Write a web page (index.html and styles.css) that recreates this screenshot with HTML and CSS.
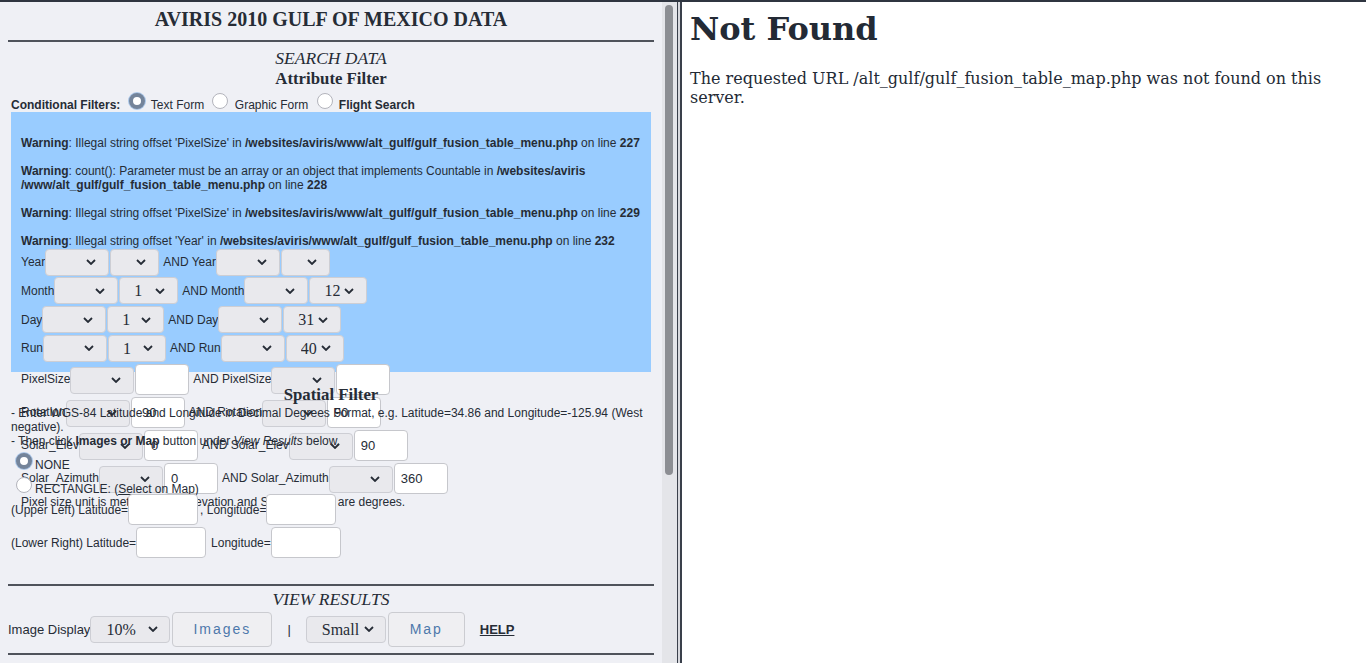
FILE: index.html
```html
<!DOCTYPE html>
<html>
<head>
<meta charset="utf-8">
<title>AVIRIS 2010 Gulf of Mexico Data</title>
<link rel="stylesheet" href="styles.css">
</head>
<body>
<div class="frames">
  <div class="frame-menu">
    <div class="menu-doc">
      <h1 class="site-title">AVIRIS 2010 GULF OF MEXICO DATA</h1>
      <hr class="rule">
      <h2 class="sec-title">SEARCH DATA</h2>
      <h3 class="sub-title">Attribute Filter</h3>
      <div class="panel">
        <div class="cond"><b>Conditional Filters:</b> <input type="radio" class="radio" name="mode" checked> Text Form <input type="radio" class="radio" name="mode"> Graphic Form <input type="radio" class="radio" name="mode"> <b>Flight Search</b></div>
        <div class="attr-box">
          <div class="warnings"><br>
<b>Warning</b>: Illegal string offset 'PixelSize' in <b>/websites/aviris/www/alt_gulf/gulf_fusion_table_menu.php</b> on line <b>227</b><br>
<br>
<b>Warning</b>: count(): Parameter must be an array or an object that implements Countable in <b>/websites/aviris<br>/www/alt_gulf/gulf_fusion_table_menu.php</b> on line <b>228</b><br>
<br>
<b>Warning</b>: Illegal string offset 'PixelSize' in <b>/websites/aviris/www/alt_gulf/gulf_fusion_table_menu.php</b> on line <b>229</b><br>
<br>
<b>Warning</b>: Illegal string offset 'Year' in <b>/websites/aviris/www/alt_gulf/gulf_fusion_table_menu.php</b> on line <b>232</b></div>
          <div class="arow">
            <span class="lbl">Year</span>
            <select class="sel w64"><option></option></select>
            <select class="sel w49"><option></option></select>
            <span class="and">AND Year</span>
            <select class="sel w64"><option></option></select>
            <select class="sel w49"><option></option></select>
          </div>
          <div class="arow">
            <span class="lbl">Month</span>
            <select class="sel w64"><option></option></select>
            <select class="sel w59"><option>1</option></select>
            <span class="and">AND Month</span>
            <select class="sel w64"><option></option></select>
            <select class="sel w58"><option>12</option></select>
          </div>
          <div class="arow">
            <span class="lbl">Day</span>
            <select class="sel w64"><option></option></select>
            <select class="sel w57"><option>1</option></select>
            <span class="and">AND Day</span>
            <select class="sel w64"><option></option></select>
            <select class="sel w58"><option>31</option></select>
          </div>
          <div class="arow">
            <span class="lbl">Run</span>
            <select class="sel w64"><option></option></select>
            <select class="sel w58"><option>1</option></select>
            <span class="and">AND Run</span>
            <select class="sel w64"><option></option></select>
            <select class="sel w58"><option>40</option></select>
          </div>
          <div class="arow tall">
            <span class="lbl">PixelSize</span>
            <select class="sel w64 low"><option></option></select>
            <input class="field" type="text" value="">
            <span class="and">AND PixelSize</span>
            <select class="sel w64 low"><option></option></select>
            <input class="field" type="text" value="">
          </div>
          <div class="arow tall">
            <span class="lbl">Rotation</span>
            <select class="sel w64 low"><option></option></select>
            <input class="field" type="text" value="-90">
            <span class="and">AND Rotation</span>
            <select class="sel w64 low"><option></option></select>
            <input class="field" type="text" value="90">
          </div>
          <div class="arow tall">
            <span class="lbl">Solar_Elev</span>
            <select class="sel w64 low"><option></option></select>
            <input class="field" type="text" value="0">
            <span class="and">AND Solar_Elev</span>
            <select class="sel w64 low"><option></option></select>
            <input class="field" type="text" value="90">
          </div>
          <div class="arow tall">
            <span class="lbl">Solar_Azimuth</span>
            <select class="sel w64 low"><option></option></select>
            <input class="field" type="text" value="0">
            <span class="and">AND Solar_Azimuth</span>
            <select class="sel w64 low"><option></option></select>
            <input class="field" type="text" value="360">
          </div>
          <div class="unit-note">Pixel size unit is meters, Solar Elevation and Solar Azimuth are degrees.</div>
        </div>
        <h3 class="sub-title spatial-title">Spatial Filter</h3>
        <div class="spatial">
          <div>- Enter WGS-84 Latitude and Longitude in Decimal Degrees Format, e.g. Latitude=34.86 and Longitude=-125.94 (West negative).</div>
          <div>- Then click <b>Images or Map</b> button under <i>View Results</i> below.</div>
          <div class="opt"><input type="radio" class="radio" name="region" checked>NONE</div>
          <div class="opt"><input type="radio" class="radio" name="region">RECTANGLE: (<a class="plain-link" href="#">Select on Map</a>)</div>
          <div class="coord first">
            <span>(Upper Left) Latitude=</span>
            <input class="field wide" type="text">
            <span class="lon lon-comma">, Longitude=</span>
            <input class="field wide" type="text">
          </div>
          <div class="coord">
            <span>(Lower Right) Latitude=</span>
            <input class="field wide" type="text">
            <span class="lon">Longitude=</span>
            <input class="field wide" type="text">
          </div>
        </div>
      </div>
      <hr class="rule rule-results">
      <h2 class="sec-title view-title">VIEW RESULTS</h2>
      <div class="results">
        <span>Image Display</span>
        <select class="sel res-sel"><option>10%</option></select>
        <button class="btn btn-images" type="button">Images</button>
        <span class="bar">|</span>
        <select class="sel res-sel"><option>Small</option></select>
        <button class="btn btn-map" type="button">Map</button>
        <a class="help" href="#">HELP</a>
      </div>
      <hr class="rule rule-end">
    </div>
    <div class="scrollbar"><div class="thumb"></div></div>
  </div>
  <div class="frame-border"></div>
  <div class="frame-map">
    <h1>Not Found</h1>
    <p>The requested URL /alt_gulf/gulf_fusion_table_map.php was not found on this server.</p>
  </div>
</div>
</body>
</html>
```
FILE: styles.css
```css
* { box-sizing: border-box; }
html, body { margin: 0; padding: 0; }
body { width: 1366px; height: 663px; overflow: hidden; background: #ffffff; }

.frames { display: flex; height: 663px; border-top: 2px solid #2f3540; }

/* left frame */
.frame-menu { width: 677px; display: flex; background: #eff0f5; overflow: hidden; }
.menu-doc { width: 662px; flex: none; padding: 6px 8px 0; color: #262c36; font-family: "Liberation Serif", serif; }
.scrollbar { width: 15px; flex: none; background: #e4e5e9; padding: 3px 4px 0 3px; }
.thumb { width: 8px; height: 470px; border-radius: 5px; background: #8c8e93; }

.frame-border { width: 5px; flex: none; background: #d8d9de; border-left: 1px solid #3a404b; border-right: 2px solid #3a404b; }

/* right frame */
.frame-map { flex: 1; background: #ffffff; padding: 8px; color: #232a35; font-family: "DejaVu Serif", serif; }
.frame-map h1 { font-size: 32px; font-weight: bold; margin: 0 0 21.44px; }
.frame-map p { font-size: 16px; margin: 0; }

/* headings */
.site-title { font-size: 20px; line-height: 23px; font-weight: bold; text-align: center; margin: 0; }
.rule { border: 0; border-top: 2px solid #4f535b; height: 0; margin: 9px 0 0; }
.sec-title { font-size: 17.5px; line-height: 18px; font-style: italic; font-weight: normal; text-align: center; margin: 7px 0 0; }
.sub-title { font-family: "Liberation Serif", serif; font-size: 16.8px; line-height: 18px; font-weight: bold; text-align: center; margin: 3px 0 0; }

.panel { padding: 0 3px; font-family: "Liberation Sans", Arial, sans-serif; font-size: 12px; line-height: 14px; }
.cond { margin-top: 2px; white-space: nowrap; }

.radio { appearance: none; -webkit-appearance: none; width: 16px; height: 16px; margin: 3px 3px 0 5px; border: 1px solid #b3b4bc; border-radius: 50%; background: #ffffff; vertical-align: baseline; }
.radio:checked { border: 4px solid #74849a; box-shadow: 0 0 0 1px #aac6e8; }

/* attribute box */
.attr-box { background: #99ccff; height: 260px; padding: 10px; }
.arow { display: flex; align-items: center; height: 28.67px; white-space: nowrap; }
.arow.tall { height: 33px; }
.and { margin-left: 3px; }

.sel { appearance: none; -webkit-appearance: none; height: 27px; margin: 0 1px 0 0; padding: 0 0 0 14px; border: 1px solid #cdced4; border-radius: 4px; background: #e9e9ed url("data:image/svg+xml,%3Csvg xmlns='http://www.w3.org/2000/svg' width='10' height='6' viewBox='0 0 10 6'%3E%3Cpath d='M1 1l4 4 4-4' fill='none' stroke='%23262c36' stroke-width='1.8'/%3E%3C/svg%3E") no-repeat right 12px center; font-family: "Liberation Serif", serif; font-size: 16px; color: #262c36; }
.sel.low { margin-top: 2px; }
.w64 { width: 64px; }
.w49 { width: 49px; }
.w57 { width: 57px; }
.w58 { width: 58px; }
.w59 { width: 59px; }

.field { width: 54px; height: 31px; margin: 0 1px 0 0; padding: 0 6px; border: 1px solid #c6c7cc; border-radius: 4px; background: #ffffff; font-family: "Liberation Sans", Arial, sans-serif; font-size: 13px; color: #262c36; }
.field.wide { width: 70px; }

.unit-note { white-space: nowrap; }

/* spatial */
.spatial-title { margin-top: 14px; }
.spatial { margin-top: 2px; }
.opt .radio { margin-top: 5px; }
.plain-link { color: inherit; text-decoration: underline; }
.coord { display: flex; align-items: center; height: 33px; white-space: nowrap; }
.coord.first { margin-top: -3px; }
.lon { margin-left: 4px; }
.lon.lon-comma { margin-left: 1px; }

/* results */
.rule-results { margin-top: 25px; }
.view-title { margin-top: 4px; }
.results { display: flex; align-items: center; height: 36px; margin-top: 3px; font-family: "Liberation Sans", Arial, sans-serif; font-size: 13px; white-space: nowrap; }
.res-sel { width: 80px; padding-left: 15px; background-position: right 11px center; }
.btn { height: 35px; border: 1px solid #cbccd1; border-radius: 4px; background: #efeff2; font-family: "Liberation Sans", Arial, sans-serif; font-size: 14px; letter-spacing: 2px; color: #4d78ab; padding: 0; }
.btn-images { width: 100px; margin-left: 1px; }
.btn-map { width: 77px; margin-left: 1px; }
.bar { margin: 0 15px; }
.help { margin-left: 15px; font-weight: bold; color: #262c36; text-decoration: underline; }
.rule-end { margin-top: 6px; }
```
